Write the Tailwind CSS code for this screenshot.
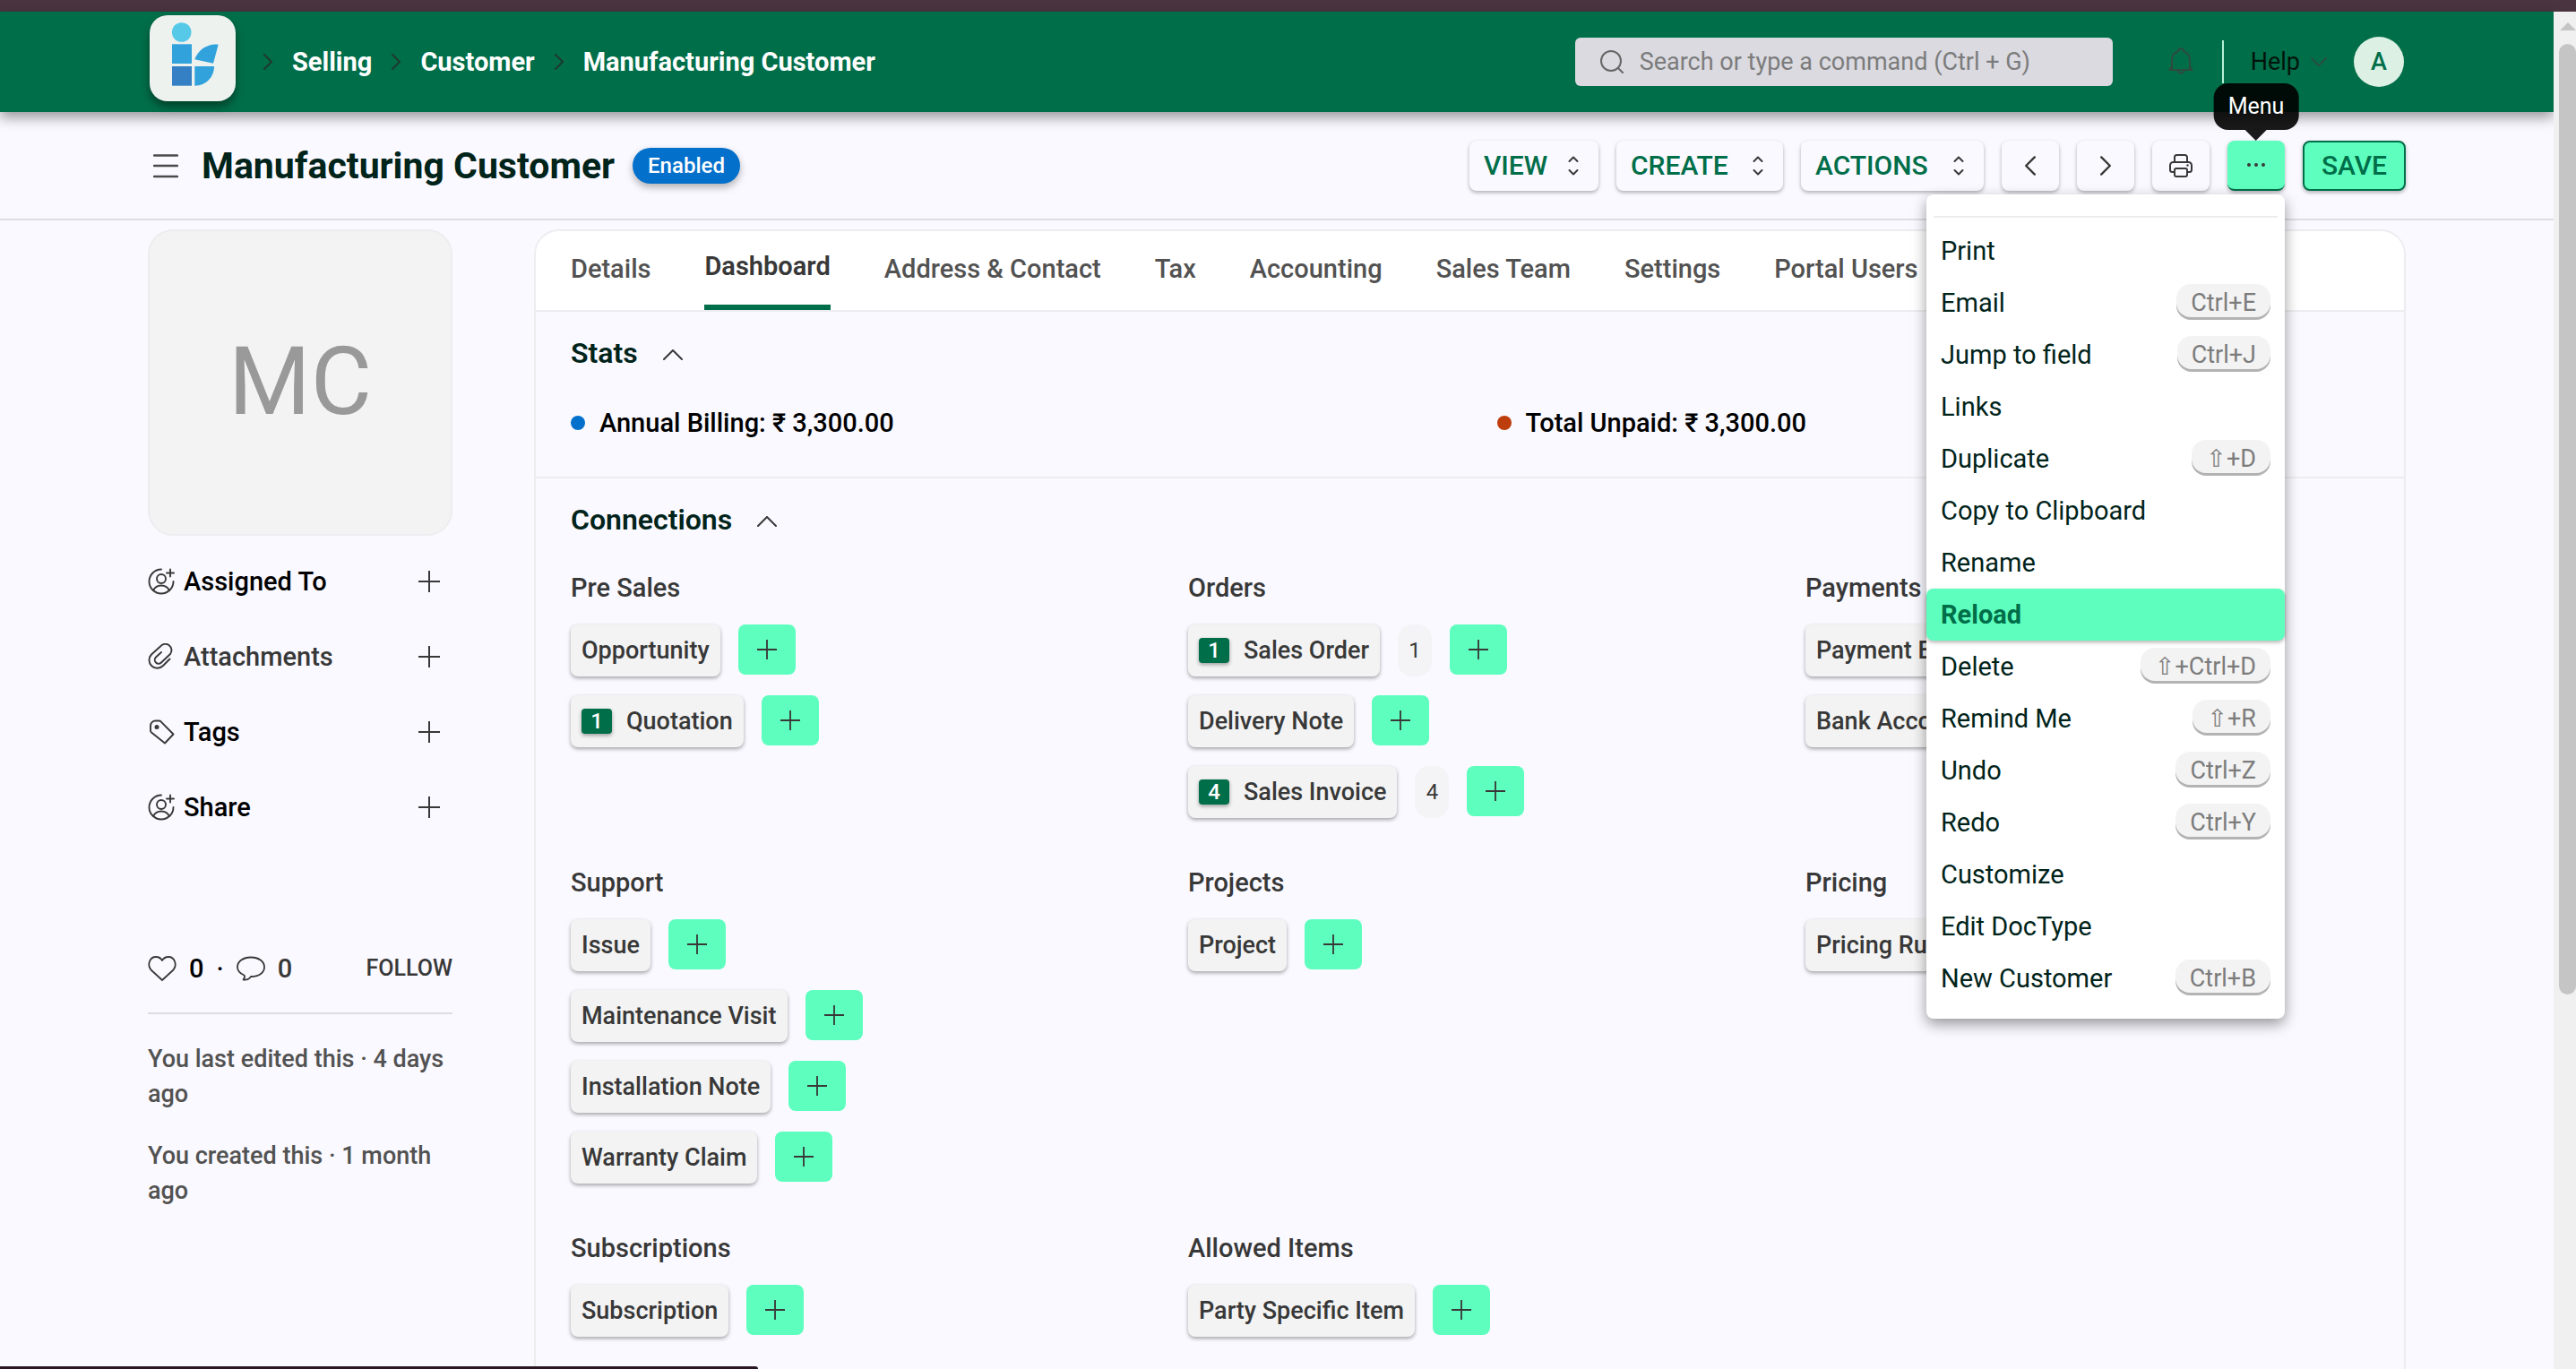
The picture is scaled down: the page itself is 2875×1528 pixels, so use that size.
<!DOCTYPE html>
<html lang="en">
<head>
    <meta charset="UTF-8" />
    <meta name="viewport" content="width=device-width, initial-scale=1.0" />
    <title>Manufacturing Customer</title>
    <script src="https://cdn.jsdelivr.net/npm/@tailwindcss/browser@4"></script>
</head>
<body class="h-screen overflow-hidden bg-[#faf9ff] font-[Roboto,sans-serif] text-[29px] leading-10 font-medium text-[#383838]">
    <!-- Icon sprite -->
    <svg class="hidden">
        <symbol id="icon-plus" viewBox="0 0 24 24"><path d="M12 0v24M0 12h24" fill="none" stroke="currentColor" stroke-width="2" /></symbol>
        <symbol id="icon-next" viewBox="0 0 10 18"><path d="M1 1l8 8-8 8" fill="none" stroke="currentColor" stroke-width="2" stroke-linecap="round" stroke-linejoin="round" /></symbol>
        <symbol id="icon-up" viewBox="0 0 22 12"><path d="M1 11L11 1l10 10" fill="none" stroke="currentColor" stroke-width="2" stroke-linecap="round" stroke-linejoin="round" /></symbol>
        <symbol id="icon-select" viewBox="0 0 24 24"><path d="M7.500 7L12 2.500 16.500 7M7.500 17l4.500 4.500 4.500-4.500" fill="none" stroke="currentColor" stroke-width="2" stroke-linecap="round" stroke-linejoin="round" /></symbol>
        <symbol id="icon-assign" viewBox="0 0 30 30">
            <g fill="none" stroke="currentColor" stroke-width="1.900" stroke-linecap="round">
                <path d="M15 1.500a13.500 13.500 0 1 0 13.500 13.500" />
                <circle cx="15" cy="12" r="5" />
                <path d="M6 25c2-4 5-5.500 9-5.500s7 1.500 9 5.500M25 1.500v8M21 5.500h8" />
            </g>
        </symbol>
        <symbol id="icon-clip" viewBox="0 0 30 30"><path d="M24.500 17.500l-7.500 7.500a9 9 0 0 1-13-12.500L14 3.500a6.800 6.800 0 0 1 11 8.500l-10 9.500a4.200 4.200 0 0 1-6-6L15 10" fill="none" stroke="currentColor" stroke-width="1.900" stroke-linecap="round" stroke-linejoin="round" /></symbol>
        <symbol id="icon-tag" viewBox="0 0 30 30">
            <path d="M3 13.500V8a5.500 5.500 0 0 1 5.500-5.500h4a3 3 0 0 1 2 .8L28.500 17.500 19 27.500 4 15.500a3 3 0 0 1-1-2z" fill="none" stroke="currentColor" stroke-width="1.900" stroke-linejoin="round" />
            <circle cx="10" cy="9.500" r="2.500" fill="currentColor" />
        </symbol>
    </svg>

    <div class="h-[13px] bg-[#4a3440]"></div>

    <div class="flex">
        <div class="min-w-0 flex-1">
            <!-- Navbar -->
            <header class="relative z-10 bg-[#006e49] shadow-[0_6px_14px_rgba(0,0,0,0.4)]">
                <div class="mx-auto flex h-28 max-w-[2520px] items-center">
                    <a href="#" aria-label="Home" class="mb-2 ml-0.5 size-24 rounded-[20px] bg-[#eef2ef] shadow-[0_6px_10px_rgba(0,0,0,0.4)]">
                        <svg viewBox="0 0 96 96" class="size-24">
                            <circle cx="35.700" cy="19" r="10.800" fill="#56c8e8" />
                            <path d="M25 32.300h22v21.700h-22z" fill="#31a2dc" />
                            <path d="M25 57h22v21.700h-22z" fill="#3580c4" />
                            <path d="M50.300 49.300C54 38 66 31 76.700 32.700L71 53.700z" fill="#31a2dc" />
                            <path d="M50.300 57H72C72 69 63 78.700 50.300 78.700z" fill="#31a2dc" />
                        </svg>
                    </a>
                    <nav class="ml-[31px] flex items-center gap-[22px] font-bold text-white">
                        <svg class="h-[18px] w-2.5 text-[#1d3a2d]"><use href="#icon-next" /></svg>
                        <a href="#">Selling</a>
                        <svg class="h-[18px] w-2.5 text-[#1d3a2d]"><use href="#icon-next" /></svg>
                        <a href="#">Customer</a>
                        <svg class="h-[18px] w-2.5 text-[#1d3a2d]"><use href="#icon-next" /></svg>
                        <a href="#">Manufacturing Customer</a>
                    </nav>
                    <label class="ml-auto flex h-[54px] w-[600px] items-center rounded-md bg-[#dadae0] pl-7">
                        <svg viewBox="0 0 26 26" class="size-[26px] text-[#666]"><g fill="none" stroke="currentColor" stroke-width="2" stroke-linecap="round"><circle cx="12" cy="12" r="11" /><path d="M20 20l5 5" /></g></svg>
                        <input type="text" aria-label="Search" placeholder="Search or type a command (Ctrl + G)" class="ml-[18px] flex-1 text-[27px] font-normal outline-none placeholder:text-[#7c7c7c]" />
                    </label>
                    <button type="button" aria-label="Notifications" class="ml-[62px]">
                        <svg viewBox="0 0 28 32" class="h-8 w-7 text-[#2f4a3f]"><path d="M1.500 25h25M4 25V14a10 10 0 0 1 7-9.800 3 3 0 0 1 6 0A10 10 0 0 1 24 14v11M4 21l-2.500 4M24 21l2.500 4M10.500 25a3.500 3.500 0 0 0 7 0" fill="none" stroke="currentColor" stroke-width="2" stroke-linejoin="round" stroke-linecap="round" /></svg>
                    </button>
                    <div class="ml-8 h-12 w-0.5 bg-[#b5f0d4]"></div>
                    <button type="button" class="ml-[30px] flex items-center gap-3 text-[27px] font-normal text-[#00140b]">
                        Help
                        <svg class="h-2.5 w-[18px] rotate-180 text-[#2f4a3f]"><use href="#icon-up" /></svg>
                    </button>
                    <button type="button" class="mr-0.5 ml-[30px] flex size-14 items-center justify-center rounded-full bg-[#dcf0e4] text-[27px] text-[#006e49]">A</button>
                </div>
            </header>

            <!-- Page head -->
            <div class="border-b-2 border-[#dddde3]">
                <div class="mx-auto flex h-[119px] max-w-[2520px] items-center gap-5">
                    <button type="button" aria-label="Toggle sidebar" class="ml-1.5">
                        <svg viewBox="0 0 28 28" class="size-7 text-[#4a4a4a]"><path d="M1 2.500h26M1 14h26M1 26h26" fill="none" stroke="currentColor" stroke-width="2.500" stroke-linecap="round" /></svg>
                    </button>
                    <h1 class="ml-1.5 text-[41px] font-bold text-[#00231a]">Manufacturing Customer</h1>
                    <span class="flex h-10 items-center rounded-full bg-[#0370cc] px-[17px] text-[24px] text-white shadow-[0_4px_8px_rgba(0,0,0,0.3)]">Enabled</span>

                    <button type="button" class="ml-auto flex h-14 min-w-[144px] items-center justify-between rounded-lg px-4 text-[30px] text-[#006e49] shadow-[0_2px_4px_rgba(0,0,0,0.3)]">VIEW<svg class="size-6 text-[#383838]"><use href="#icon-select" /></svg></button>
                    <button type="button" class="flex h-14 min-w-[186px] items-center justify-between rounded-lg px-4 text-[30px] text-[#006e49] shadow-[0_2px_4px_rgba(0,0,0,0.3)]">CREATE<svg class="size-6 text-[#383838]"><use href="#icon-select" /></svg></button>
                    <button type="button" class="flex h-14 min-w-[204px] items-center justify-between rounded-lg px-4 text-[30px] text-[#006e49] shadow-[0_2px_4px_rgba(0,0,0,0.3)]">ACTIONS<svg class="size-6 text-[#383838]"><use href="#icon-select" /></svg></button>
                    <button type="button" aria-label="Previous" class="flex h-14 w-16 items-center justify-center rounded-lg shadow-[0_2px_4px_rgba(0,0,0,0.3)]"><svg class="h-[22px] w-3 rotate-180"><use href="#icon-next" /></svg></button>
                    <button type="button" aria-label="Next" class="flex h-14 w-16 items-center justify-center rounded-lg shadow-[0_2px_4px_rgba(0,0,0,0.3)]"><svg class="h-[22px] w-3"><use href="#icon-next" /></svg></button>
                    <button type="button" aria-label="Print" class="flex h-14 w-16 items-center justify-center rounded-lg shadow-[0_2px_4px_rgba(0,0,0,0.3)]">
                        <svg viewBox="0 0 26 26" class="size-[26px]"><g fill="none" stroke="currentColor" stroke-width="2" stroke-linejoin="round"><path d="M6 9V3.500A2.500 2.500 0 0 1 8.500 1h9A2.500 2.500 0 0 1 20 3.500V9M6 20H3.500A2.500 2.500 0 0 1 1 17.500v-5A3.500 3.500 0 0 1 4.500 9h17a3.500 3.500 0 0 1 3.500 3.500v5a2.500 2.500 0 0 1-2.500 2.500H20" /><rect x="6" y="16" width="14" height="9" rx="2" /></g><circle cx="20.500" cy="12.500" r="1.200" fill="currentColor" /></svg>
                    </button>
                    <div class="relative">
                        <button type="button" aria-label="Menu" aria-expanded="true" class="flex h-14 w-16 items-center justify-center rounded-lg border-b-2 border-[#006e49] bg-[#5effbe] shadow-[0_2px_4px_rgba(0,0,0,0.3)]">
                            <svg viewBox="0 0 20 4" class="h-1 w-5"><g fill="currentColor"><circle cx="2" cy="2" r="2" /><circle cx="10" cy="2" r="2" /><circle cx="18" cy="2" r="2" /></g></svg>
                        </button>
                        <div role="tooltip" class="absolute bottom-full left-1/2 z-20 mb-3 -translate-x-1/2 rounded-2xl bg-black/90 px-4 py-1.5 text-[25px] font-normal text-white">
                            Menu
                            <svg viewBox="0 0 24 12" class="absolute top-full left-1/2 h-3 w-6 -translate-x-1/2"><path d="M0 0h24L12 12z" fill="#1a1a1c" /></svg>
                        </div>
                        <ul role="menu" class="absolute top-full right-0 z-20 mt-1 w-[400px] rounded-lg bg-white pt-6 pb-4 leading-[58px] font-normal text-[#00231a] shadow-[0_6px_16px_rgba(0,0,0,0.4)]">
                            <li role="separator" class="mx-2 mb-2 h-0.5 bg-[#ededed]"></li>
                            <li><button type="button" role="menuitem" class="flex w-full items-center justify-between px-4">Print</button></li>
                            <li><button type="button" role="menuitem" class="flex w-full items-center justify-between px-4">Email<kbd class="mb-1 h-[37px] rounded-2xl bg-[#f3f3f3] px-4 font-[Roboto,DejaVu_Sans,sans-serif] text-[27px] leading-[42px] text-[#7c7c7c] shadow-[0_3px_0_#b3b3b3]">Ctrl+E</kbd></button></li>
                            <li><button type="button" role="menuitem" class="flex w-full items-center justify-between px-4">Jump to field<kbd class="mb-1 h-[37px] rounded-2xl bg-[#f3f3f3] px-4 font-[Roboto,DejaVu_Sans,sans-serif] text-[27px] leading-[42px] text-[#7c7c7c] shadow-[0_3px_0_#b3b3b3]">Ctrl+J</kbd></button></li>
                            <li><button type="button" role="menuitem" class="flex w-full items-center justify-between px-4">Links</button></li>
                            <li><button type="button" role="menuitem" class="flex w-full items-center justify-between px-4">Duplicate<kbd class="mb-1 h-[37px] rounded-2xl bg-[#f3f3f3] px-4 font-[Roboto,DejaVu_Sans,sans-serif] text-[27px] leading-[42px] text-[#7c7c7c] shadow-[0_3px_0_#b3b3b3]">⇧+D</kbd></button></li>
                            <li><button type="button" role="menuitem" class="flex w-full items-center justify-between px-4">Copy to Clipboard</button></li>
                            <li><button type="button" role="menuitem" class="flex w-full items-center justify-between px-4">Rename</button></li>
                            <li><button type="button" role="menuitem" class="flex w-full items-center justify-between rounded-lg bg-[#5effbe] px-4 font-bold text-[#006e49] shadow-[0_2px_4px_rgba(0,0,0,0.3)]">Reload</button></li>
                            <li><button type="button" role="menuitem" class="flex w-full items-center justify-between px-4">Delete<kbd class="mb-1 h-[37px] rounded-2xl bg-[#f3f3f3] px-4 font-[Roboto,DejaVu_Sans,sans-serif] text-[27px] leading-[42px] text-[#7c7c7c] shadow-[0_3px_0_#b3b3b3]">⇧+Ctrl+D</kbd></button></li>
                            <li><button type="button" role="menuitem" class="flex w-full items-center justify-between px-4">Remind Me<kbd class="mb-1 h-[37px] rounded-2xl bg-[#f3f3f3] px-4 font-[Roboto,DejaVu_Sans,sans-serif] text-[27px] leading-[42px] text-[#7c7c7c] shadow-[0_3px_0_#b3b3b3]">⇧+R</kbd></button></li>
                            <li><button type="button" role="menuitem" class="flex w-full items-center justify-between px-4">Undo<kbd class="mb-1 h-[37px] rounded-2xl bg-[#f3f3f3] px-4 font-[Roboto,DejaVu_Sans,sans-serif] text-[27px] leading-[42px] text-[#7c7c7c] shadow-[0_3px_0_#b3b3b3]">Ctrl+Z</kbd></button></li>
                            <li><button type="button" role="menuitem" class="flex w-full items-center justify-between px-4">Redo<kbd class="mb-1 h-[37px] rounded-2xl bg-[#f3f3f3] px-4 font-[Roboto,DejaVu_Sans,sans-serif] text-[27px] leading-[42px] text-[#7c7c7c] shadow-[0_3px_0_#b3b3b3]">Ctrl+Y</kbd></button></li>
                            <li><button type="button" role="menuitem" class="flex w-full items-center justify-between px-4">Customize</button></li>
                            <li><button type="button" role="menuitem" class="flex w-full items-center justify-between px-4">Edit DocType</button></li>
                            <li><button type="button" role="menuitem" class="flex w-full items-center justify-between px-4">New Customer<kbd class="mb-1 h-[37px] rounded-2xl bg-[#f3f3f3] px-4 font-[Roboto,DejaVu_Sans,sans-serif] text-[27px] leading-[42px] text-[#7c7c7c] shadow-[0_3px_0_#b3b3b3]">Ctrl+B</kbd></button></li>
                        </ul>
                    </div>
                    <button type="button" class="h-14 min-w-[115px] rounded-lg border-2 border-[#006e49] bg-[#5effbe] px-4 text-[30px] text-[#006e49] shadow-[0_2px_4px_rgba(0,0,0,0.3)]">SAVE</button>
                </div>
            </div>

            <div class="mx-auto flex max-w-[2520px] gap-[91px] pt-2.5">
                <!-- Sidebar -->
                <aside class="w-[340px] shrink-0">
                    <div class="flex h-[342px] items-center justify-center rounded-[28px] border-2 border-[#ededf0] bg-[#f3f3f3] text-[105px] font-normal text-[#999]">MC</div>
                    <ul class="mt-[9px]">
                        <li class="flex h-[84px] items-center">
                            <svg class="mr-2.5 size-[30px]"><use href="#icon-assign" /></svg><span class="text-black">Assigned To</span>
                            <button type="button" aria-label="Assign" class="mr-3.5 ml-auto"><svg class="size-6"><use href="#icon-plus" /></svg></button>
                        </li>
                        <li class="flex h-[84px] items-center">
                            <svg class="mr-2.5 size-[30px]"><use href="#icon-clip" /></svg><span>Attachments</span>
                            <button type="button" aria-label="Attach file" class="mr-3.5 ml-auto"><svg class="size-6"><use href="#icon-plus" /></svg></button>
                        </li>
                        <li class="flex h-[84px] items-center">
                            <svg class="mr-2.5 size-[30px]"><use href="#icon-tag" /></svg><span class="text-black">Tags</span>
                            <button type="button" aria-label="Add tag" class="mr-3.5 ml-auto"><svg class="size-6"><use href="#icon-plus" /></svg></button>
                        </li>
                        <li class="flex h-[84px] items-center">
                            <svg class="mr-2.5 size-[30px]"><use href="#icon-assign" /></svg><span class="text-black">Share</span>
                            <button type="button" aria-label="Share" class="mr-3.5 ml-auto"><svg class="size-6"><use href="#icon-plus" /></svg></button>
                        </li>
                    </ul>
                    <div class="mt-[118px] flex items-center border-b-2 border-[#dddde3] pb-[29px]">
                        <button type="button" class="flex items-center gap-[14px] text-black">
                            <svg viewBox="0 0 32 28" class="h-7 w-8 text-[#383838]"><path d="M16 27L3.500 15.500C-1 10 2 1 9 1c3.500 0 5.500 1.500 7 4 1.500-2.500 3.500-4 7-4 7 0 10 9 5.500 14.500z" fill="none" stroke="currentColor" stroke-width="1.800" stroke-linejoin="round" /></svg>
                            0
                        </button>
                        <span class="mx-3.5 text-black">·</span>
                        <button type="button" class="flex items-center gap-[14px]">
                            <svg viewBox="0 0 32 28" class="h-7 w-8"><path d="M7.500 26.500C9 25 9.500 23.500 8.500 21.500 4 19.500 1 16.500 1 12.500 1 6 7.500 1.500 16 1.500S31 6 31 12.500 24.500 23 16 23c-2 3-5 4-8.500 3.500z" fill="none" stroke="currentColor" stroke-width="1.800" stroke-linejoin="round" /></svg>
                            0
                        </button>
                        <button type="button" class="ml-auto text-[25px]">FOLLOW</button>
                    </div>
                    <p class="mt-[31px] text-[27px] leading-[39px] text-[#525252]">You last edited this · 4 days ago</p>
                    <p class="mt-[30px] text-[27px] leading-[39px] text-[#525252]">You created this · 1 month ago</p>
                </aside>

                <!-- Form -->
                <main class="min-w-0 flex-1 rounded-t-[28px] border-2 border-[#ededf0] pb-20">
                    <nav class="flex h-[90px] gap-[60px] rounded-t-[26px] border-b-2 border-[#ededf0] bg-white px-[39px] text-[#525252]">
                        <a href="#" class="flex items-center pb-1">Details</a>
                        <a href="#" class="flex items-center border-b-6 border-[#006e49] pb-1 font-semibold text-[#383838]">Dashboard</a>
                        <a href="#" class="flex items-center pb-1">Address &amp; Contact</a>
                        <a href="#" class="flex items-center pb-1">Tax</a>
                        <a href="#" class="flex items-center pb-1">Accounting</a>
                        <a href="#" class="flex items-center pb-1">Sales Team</a>
                        <a href="#" class="flex items-center pb-1">Settings</a>
                        <a href="#" class="flex items-center pb-1">Portal Users</a>
                    </nav>

                    <section class="border-b-2 border-[#ededf0] px-[39px] pt-[26px] pb-10">
                        <h2 class="flex items-center gap-7 text-[32px] font-semibold text-[#00231a]">Stats<svg class="mt-1 h-3 w-[22px] text-[#383838]"><use href="#icon-up" /></svg></h2>
                        <div class="mt-[38px] grid grid-cols-2 gap-[60px] text-black">
                            <div class="flex items-center gap-4"><span class="size-4 rounded-full bg-[#0370cc]"></span>Annual Billing: ₹ 3,300.00</div>
                            <div class="flex items-center gap-4"><span class="size-4 rounded-full bg-[#bd3e0c]"></span>Total Unpaid: ₹ 3,300.00</div>
                        </div>
                    </section>

                    <section class="px-[39px] pt-[26px]">
                        <h2 class="flex items-center gap-7 text-[32px] font-semibold text-[#00231a]">Connections<svg class="mt-1 h-3 w-[22px] text-[#383838]"><use href="#icon-up" /></svg></h2>
                        <div class="mt-9 grid grid-cols-3 gap-x-[60px] gap-y-[52px]">
                            <div class="flex flex-col gap-[21px]">
                                <h3>Pre Sales</h3>
                                <div class="flex items-start gap-5">
                                    <a href="#" class="flex h-[58px] items-center rounded-lg bg-[#f3f3f3] px-3 text-[27px] shadow-[0_2px_4px_rgba(0,0,0,0.35)]">Opportunity</a>
                                    <button type="button" aria-label="New Opportunity" class="flex h-14 w-16 items-center justify-center rounded-lg bg-[#5effbe]"><svg class="size-[22px]"><use href="#icon-plus" /></svg></button>
                                </div>
                                <div class="flex items-start gap-5">
                                    <a href="#" class="flex h-[58px] items-center rounded-lg bg-[#f3f3f3] px-3 text-[27px] shadow-[0_2px_4px_rgba(0,0,0,0.35)]"><span class="mr-4 w-[34px] rounded bg-[#006e49] text-center text-[24px] leading-7 text-white shadow-[0_2px_4px_rgba(0,0,0,0.35)]">1</span>Quotation</a>
                                    <button type="button" aria-label="New Quotation" class="flex h-14 w-16 items-center justify-center rounded-lg bg-[#5effbe]"><svg class="size-[22px]"><use href="#icon-plus" /></svg></button>
                                </div>
                            </div>
                            <div class="flex flex-col gap-[21px]">
                                <h3>Orders</h3>
                                <div class="flex items-start gap-5">
                                    <a href="#" class="flex h-[58px] items-center rounded-lg bg-[#f3f3f3] px-3 text-[27px] shadow-[0_2px_4px_rgba(0,0,0,0.35)]"><span class="mr-4 w-[34px] rounded bg-[#006e49] text-center text-[24px] leading-7 text-white shadow-[0_2px_4px_rgba(0,0,0,0.35)]">1</span>Sales Order</a>
                                    <span class="flex h-[58px] w-[38px] items-center justify-center rounded-2xl bg-[#f4f4f6] text-[24px] font-normal">1</span>
                                    <button type="button" aria-label="New Sales Order" class="flex h-14 w-16 items-center justify-center rounded-lg bg-[#5effbe]"><svg class="size-[22px]"><use href="#icon-plus" /></svg></button>
                                </div>
                                <div class="flex items-start gap-5">
                                    <a href="#" class="flex h-[58px] items-center rounded-lg bg-[#f3f3f3] px-3 text-[27px] shadow-[0_2px_4px_rgba(0,0,0,0.35)]">Delivery Note</a>
                                    <button type="button" aria-label="New Delivery Note" class="flex h-14 w-16 items-center justify-center rounded-lg bg-[#5effbe]"><svg class="size-[22px]"><use href="#icon-plus" /></svg></button>
                                </div>
                                <div class="flex items-start gap-5">
                                    <a href="#" class="flex h-[58px] items-center rounded-lg bg-[#f3f3f3] px-3 text-[27px] shadow-[0_2px_4px_rgba(0,0,0,0.35)]"><span class="mr-4 w-[34px] rounded bg-[#006e49] text-center text-[24px] leading-7 text-white shadow-[0_2px_4px_rgba(0,0,0,0.35)]">4</span>Sales Invoice</a>
                                    <span class="flex h-[58px] w-[38px] items-center justify-center rounded-2xl bg-[#f4f4f6] text-[24px] font-normal">4</span>
                                    <button type="button" aria-label="New Sales Invoice" class="flex h-14 w-16 items-center justify-center rounded-lg bg-[#5effbe]"><svg class="size-[22px]"><use href="#icon-plus" /></svg></button>
                                </div>
                            </div>
                            <div class="flex flex-col gap-[21px]">
                                <h3>Payments</h3>
                                <div class="flex items-start gap-5">
                                    <a href="#" class="flex h-[58px] items-center rounded-lg bg-[#f3f3f3] px-3 text-[27px] shadow-[0_2px_4px_rgba(0,0,0,0.35)]">Payment Entry</a>
                                </div>
                                <div class="flex items-start gap-5">
                                    <a href="#" class="flex h-[58px] items-center rounded-lg bg-[#f3f3f3] px-3 text-[27px] shadow-[0_2px_4px_rgba(0,0,0,0.35)]">Bank Account</a>
                                </div>
                            </div>

                            <div class="flex flex-col gap-[21px]">
                                <h3>Support</h3>
                                <div class="flex items-start gap-5">
                                    <a href="#" class="flex h-[58px] items-center rounded-lg bg-[#f3f3f3] px-3 text-[27px] shadow-[0_2px_4px_rgba(0,0,0,0.35)]">Issue</a>
                                    <button type="button" aria-label="New Issue" class="flex h-14 w-16 items-center justify-center rounded-lg bg-[#5effbe]"><svg class="size-[22px]"><use href="#icon-plus" /></svg></button>
                                </div>
                                <div class="flex items-start gap-5">
                                    <a href="#" class="flex h-[58px] items-center rounded-lg bg-[#f3f3f3] px-3 text-[27px] shadow-[0_2px_4px_rgba(0,0,0,0.35)]">Maintenance Visit</a>
                                    <button type="button" aria-label="New Maintenance Visit" class="flex h-14 w-16 items-center justify-center rounded-lg bg-[#5effbe]"><svg class="size-[22px]"><use href="#icon-plus" /></svg></button>
                                </div>
                                <div class="flex items-start gap-5">
                                    <a href="#" class="flex h-[58px] items-center rounded-lg bg-[#f3f3f3] px-3 text-[27px] shadow-[0_2px_4px_rgba(0,0,0,0.35)]">Installation Note</a>
                                    <button type="button" aria-label="New Installation Note" class="flex h-14 w-16 items-center justify-center rounded-lg bg-[#5effbe]"><svg class="size-[22px]"><use href="#icon-plus" /></svg></button>
                                </div>
                                <div class="flex items-start gap-5">
                                    <a href="#" class="flex h-[58px] items-center rounded-lg bg-[#f3f3f3] px-3 text-[27px] shadow-[0_2px_4px_rgba(0,0,0,0.35)]">Warranty Claim</a>
                                    <button type="button" aria-label="New Warranty Claim" class="flex h-14 w-16 items-center justify-center rounded-lg bg-[#5effbe]"><svg class="size-[22px]"><use href="#icon-plus" /></svg></button>
                                </div>
                            </div>
                            <div class="flex flex-col gap-[21px]">
                                <h3>Projects</h3>
                                <div class="flex items-start gap-5">
                                    <a href="#" class="flex h-[58px] items-center rounded-lg bg-[#f3f3f3] px-3 text-[27px] shadow-[0_2px_4px_rgba(0,0,0,0.35)]">Project</a>
                                    <button type="button" aria-label="New Project" class="flex h-14 w-16 items-center justify-center rounded-lg bg-[#5effbe]"><svg class="size-[22px]"><use href="#icon-plus" /></svg></button>
                                </div>
                            </div>
                            <div class="flex flex-col gap-[21px]">
                                <h3>Pricing</h3>
                                <div class="flex items-start gap-5">
                                    <a href="#" class="flex h-[58px] items-center rounded-lg bg-[#f3f3f3] px-3 text-[27px] shadow-[0_2px_4px_rgba(0,0,0,0.35)]">Pricing Rule</a>
                                </div>
                            </div>

                            <div class="flex flex-col gap-[21px]">
                                <h3>Subscriptions</h3>
                                <div class="flex items-start gap-5">
                                    <a href="#" class="flex h-[58px] items-center rounded-lg bg-[#f3f3f3] px-3 text-[27px] shadow-[0_2px_4px_rgba(0,0,0,0.35)]">Subscription</a>
                                    <button type="button" aria-label="New Subscription" class="flex h-14 w-16 items-center justify-center rounded-lg bg-[#5effbe]"><svg class="size-[22px]"><use href="#icon-plus" /></svg></button>
                                </div>
                            </div>
                            <div class="flex flex-col gap-[21px]">
                                <h3>Allowed Items</h3>
                                <div class="flex items-start gap-5">
                                    <a href="#" class="flex h-[58px] items-center rounded-lg bg-[#f3f3f3] px-3 text-[27px] shadow-[0_2px_4px_rgba(0,0,0,0.35)]">Party Specific Item</a>
                                    <button type="button" aria-label="New Party Specific Item" class="flex h-14 w-16 items-center justify-center rounded-lg bg-[#5effbe]"><svg class="size-[22px]"><use href="#icon-plus" /></svg></button>
                                </div>
                            </div>
                        </div>
                    </section>
                </main>
            </div>
        </div>

        <!-- Scrollbar -->
        <div class="relative z-20 flex h-screen w-[25px] shrink-0 flex-col items-end bg-[#f0f0f0] pt-3">
            <svg viewBox="0 0 18 9" class="mb-[15px] h-[9px] w-[18px]"><path d="M9 0l9 9H0z" fill="#c5c5c5" /></svg>
            <div class="h-[70%] w-[19px] rounded-full bg-[#c5c5c5]"></div>
        </div>
    </div>

    <div class="fixed bottom-0 left-0 h-[3px] w-[846px] rounded-tr bg-[#2b1522]"></div>
</body>
</html>
